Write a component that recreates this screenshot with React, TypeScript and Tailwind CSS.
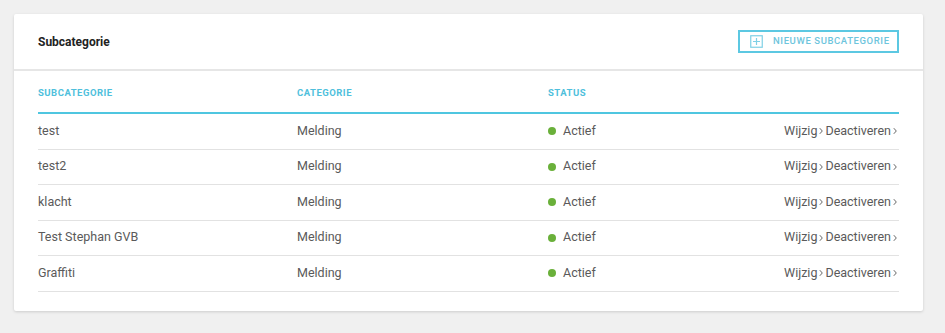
import React from "react";

const rows = ["test", "test2", "klacht", "Test Stephan GVB", "Graffiti"];

function Chevron() {
  return (
    <svg width="4" height="8" viewBox="0 0 4 8" className="mx-[2px]">
      <path d="M0.8 1.2 L3.3 4 L0.8 6.8" fill="none" stroke="#666" strokeWidth="1" />
    </svg>
  );
}

export default function App() {
  return (
    <div
      className="w-[945px] h-[333px] bg-[#f0f0f0] pt-[14px] pl-[14px]"
      style={{ fontFamily: "Roboto, 'Liberation Sans', sans-serif" }}
    >
      <div className="w-[909px] h-[297px] bg-white rounded-[2px] shadow-[0_1px_3px_rgba(0,0,0,0.15)]">
        <div className="h-[57px] flex items-center justify-between pl-[24px] pr-[24px] border-b-2 border-[#e6e6e6]">
          <div className="text-[12px] font-bold text-[#222] pt-[1px]">Subcategorie</div>
          <div className="h-[23px] w-[161px] border-2 border-[#5cc8e2] flex items-center pl-[10px] gap-[10px]">
            <svg width="13" height="13" viewBox="0 0 13 13">
              <rect x="0.75" y="0.75" width="11.5" height="11.5" fill="none" stroke="#7fd0e6" strokeWidth="1.2" />
              <path d="M6.5 3 V10 M3 6.5 H10" stroke="#7fd0e6" strokeWidth="1.2" />
            </svg>
            <span className="text-[9.5px] font-medium tracking-[0.6px] text-[#6ec5dd]">NIEUWE SUBCATEGORIE</span>
          </div>
        </div>
        <div className="px-[24px]">
          <div className="h-[43px] pt-[3px] flex items-center border-b-2 border-[#4fc6e0] text-[9.5px] font-bold tracking-[0.5px] text-[#4fbfdc]">
            <div className="w-[259px]">SUBCATEGORIE</div>
            <div className="w-[251px]">CATEGORIE</div>
            <div>STATUS</div>
          </div>
          {rows.map((r) => (
            <div key={r} className="h-[35.5px] flex items-center border-b border-[#e2e2e2] text-[12.5px] text-[#5a5a5a]">
              <div className="w-[259px]">{r}</div>
              <div className="w-[251px]">Melding</div>
              <div className="flex items-center gap-[7px] flex-1">
                <span className="w-[8px] h-[8px] rounded-full bg-[#6ab03a]"></span>
                <span>Actief</span>
              </div>
              <div className="flex items-center">
                <span>Wijzig</span>
                <Chevron />
                <span>Deactiveren</span>
                <Chevron />
              </div>
            </div>
          ))}
        </div>
      </div>
    </div>
  );
}
